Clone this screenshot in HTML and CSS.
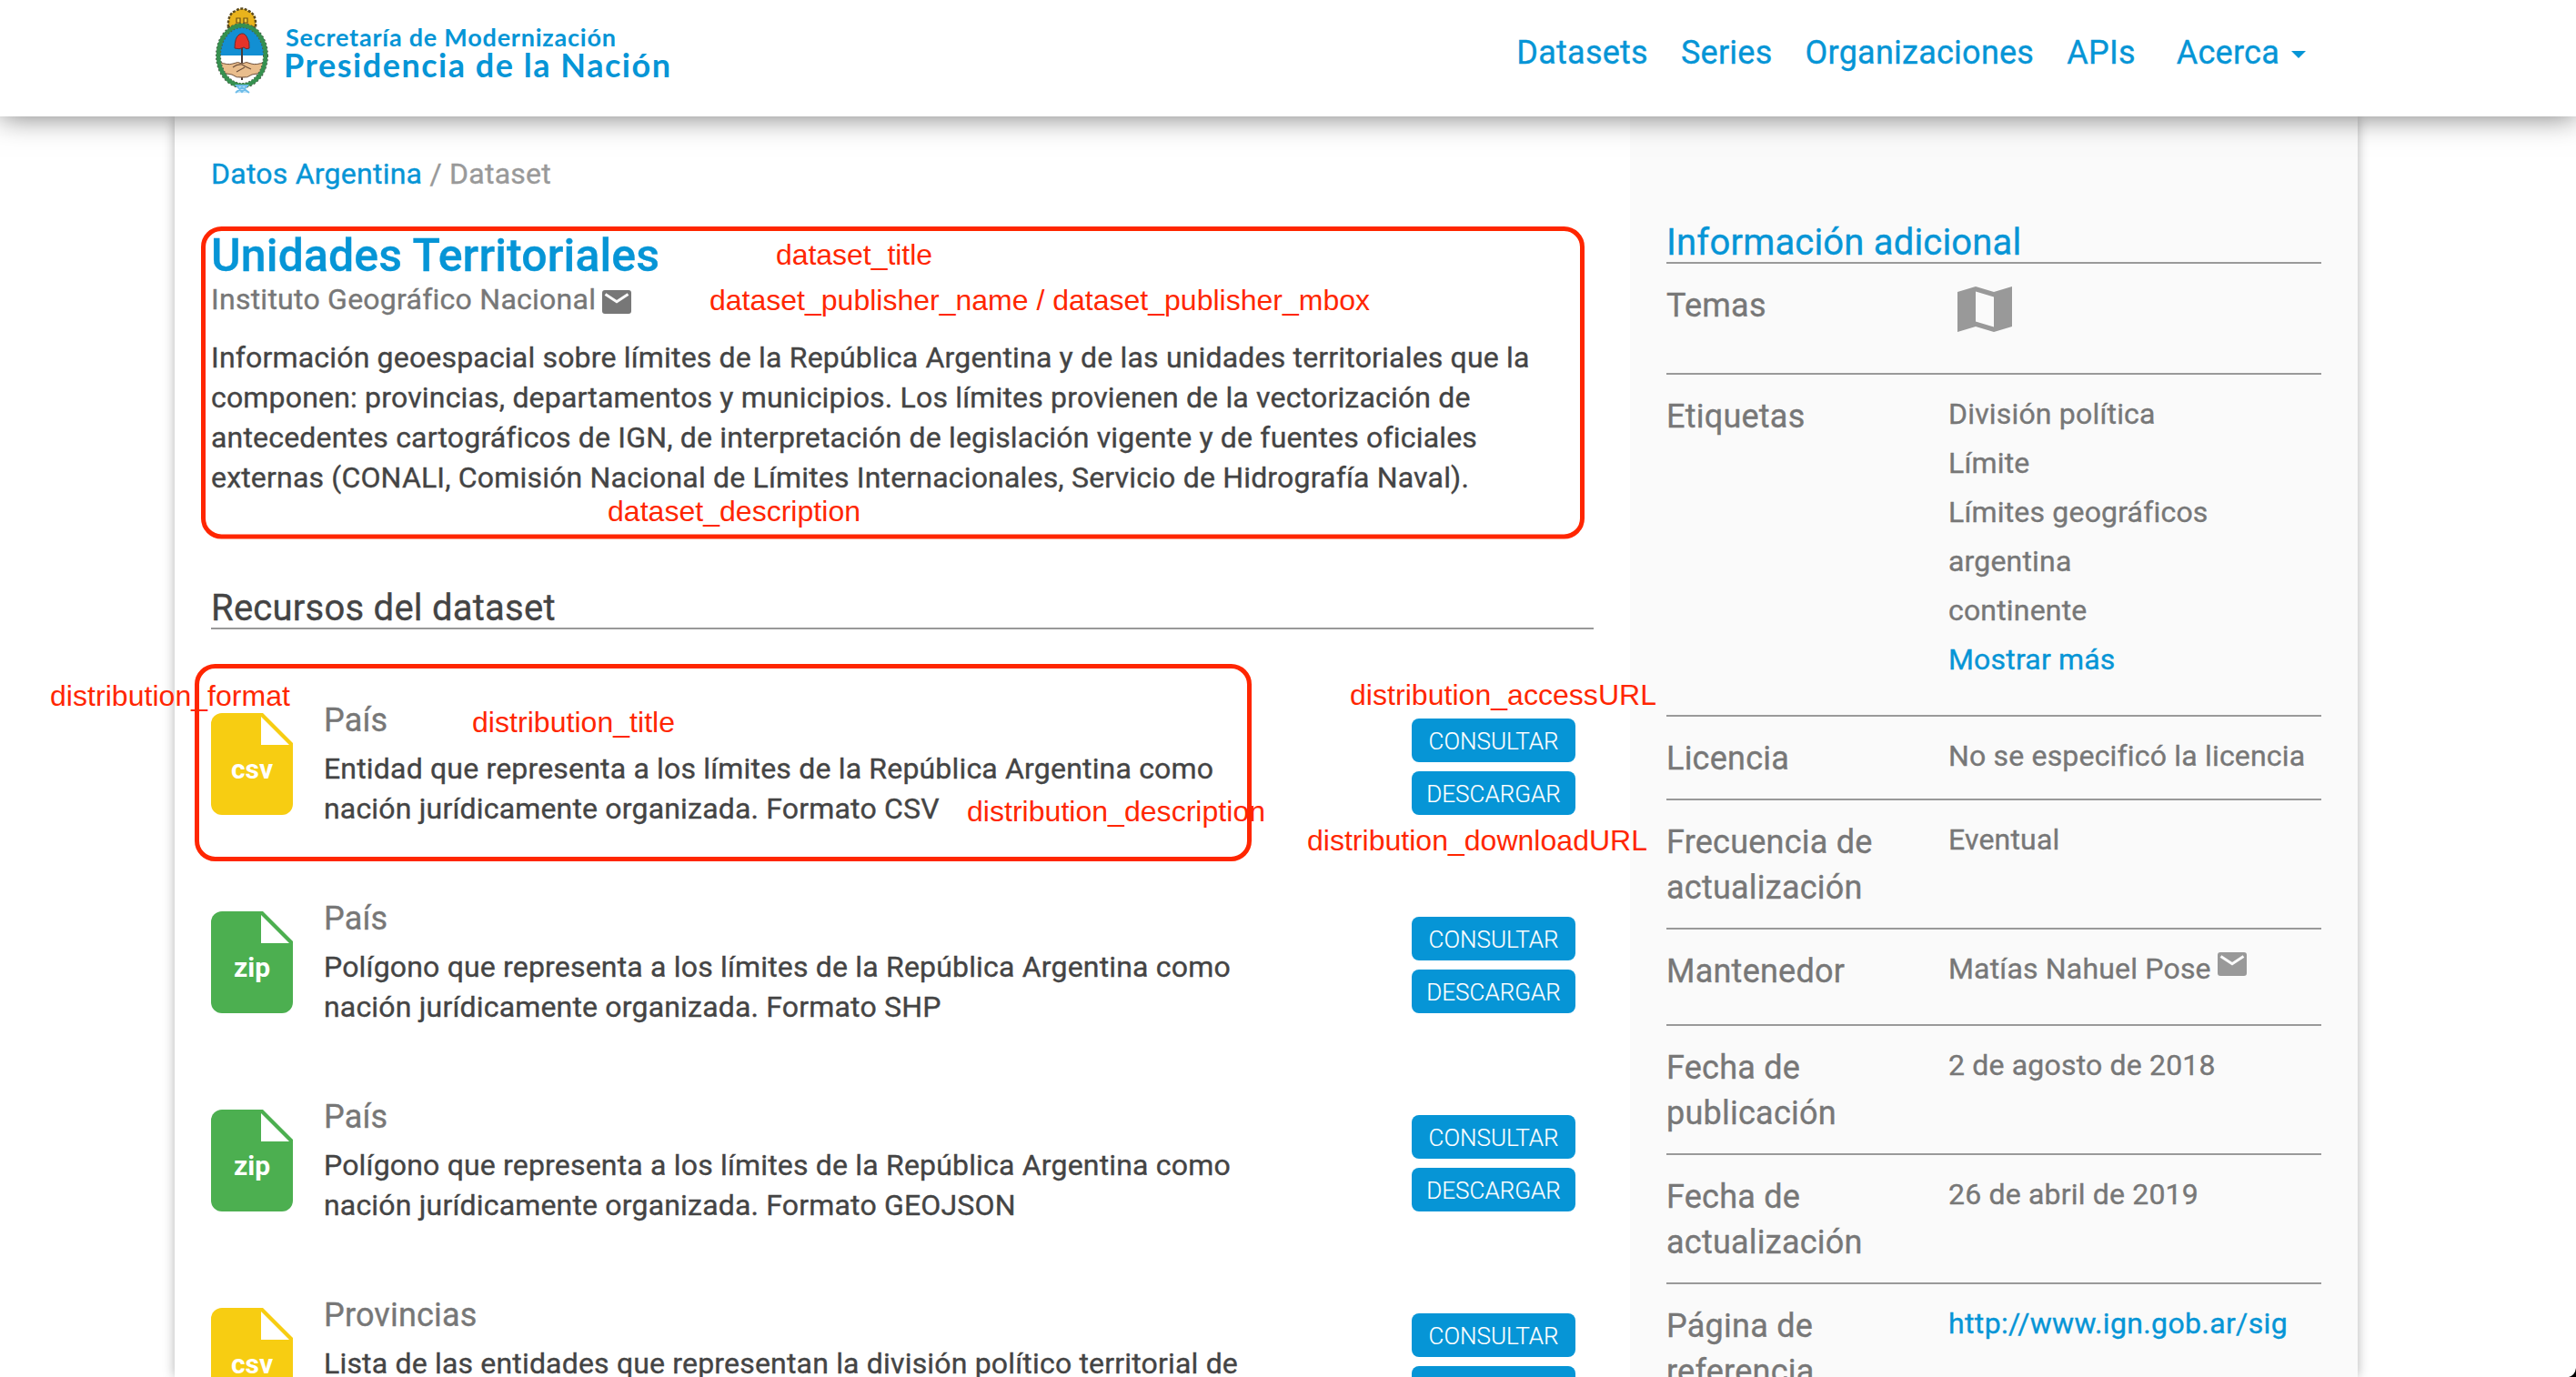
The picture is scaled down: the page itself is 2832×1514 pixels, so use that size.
FILE: index.html
```html
<!DOCTYPE html>
<html lang="es">
<head>
<meta charset="utf-8">
<title>Unidades Territoriales - Datos Argentina</title>
<link rel="stylesheet" href="styles.css">
</head>
<body>
<svg class="symbols" aria-hidden="true">
  <symbol id="mail" viewBox="0 0 32 26"><path fill="currentColor" d="M3 0h26a3 3 0 0 1 3 3v20a3 3 0 0 1-3 3H3a3 3 0 0 1-3-3V3a3 3 0 0 1 3-3z"/><path d="M3.500 4.500L16 12.800 28.500 4.500" fill="none" stroke="#fbfbfb" stroke-width="3"/></symbol>
  <symbol id="file" viewBox="0 0 90 112"><path fill="currentColor" d="M12 0h45l33 33v67a12 12 0 0 1-12 12H12a12 12 0 0 1-12-12V12A12 12 0 0 1 12 0z"/><path fill="#fff" d="M55 4v31h31z"/></symbol>
</svg>

<header class="header">
  <a class="logo">
    <svg width="520" height="112" viewBox="0 0 520 112">
      <g transform="translate(3 8)">
        <path d="M14 22Q13 7 22 4Q29-1 36 4Q45 7 44 22z" fill="#e9b31c" stroke="#5b4a1e" stroke-width="2.500" stroke-dasharray="3 1.500"/>
        <path d="M23 12h4v5h-4zM31 12h4v5h-4z" fill="#f3c93a" stroke="#6b4f14" stroke-width="1.200"/>
        <ellipse cx="29" cy="53" rx="25" ry="33" fill="#fff"/>
        <path d="M4 53a25 33 0 0 1 50 0z" fill="#128fd3"/>
        <path d="M29 42v38" stroke="#4a3b37" stroke-width="2"/>
        <path d="M21 45q0-12 5-15q5-3 8 2q4 6 3 13q-3 2-6-1q-5 3-10 1z" fill="#e5332a" stroke="#6b2b30" stroke-width="1"/>
        <path d="M4 60q9 4 15 2q6-3 10 0q5-3 10 0q6 2 15-2v9q-7 5-14 5q-5 4-11 3q-6 1-11-3q-7 0-14-5z" fill="#e9bd8c" stroke="#6f513c" stroke-width="1"/>
        <path d="M19 66q5-4 10-3q5 3 10 5M23 71l9-5" stroke="#6f513c" stroke-width="1.200" fill="none"/>
        <ellipse cx="29" cy="53" rx="26" ry="33" fill="none" stroke="#4c5548" stroke-width="6" stroke-dasharray="2 2"/>
        <ellipse cx="29" cy="53" rx="26" ry="33" fill="none" stroke="#36904f" stroke-width="4.500"/>
        <path d="M23 86h12l-6 7zM22 94l7-6 8 6" fill="#bfe3f7" stroke="#6dbce8" stroke-width="2"/>
      </g>
      <text class="logo-small" x="80" y="51" textLength="363">Secretaría de Modernización</text>
      <text class="logo-big" x="78" y="85" textLength="425">Presidencia de la Nación</text>
    </svg>
  </a>
  <nav class="nav">
    <a>Datasets</a><a>Series</a><a>Organizaciones</a><a>APIs</a><a class="acerca">Acerca<i class="caret"></i></a>
  </nav>
</header>

<div class="page">
  <main class="main">
    <div class="breadcrumb"><a>Datos Argentina</a> / Dataset</div>
    <h1 class="title">Unidades Territoriales</h1>
    <div class="publisher">Instituto Geográfico Nacional<svg class="mail"><use href="#mail"/></svg></div>
    <p class="description">Información geoespacial sobre límites de la República Argentina y de las unidades territoriales que la componen: provincias, departamentos y municipios. Los límites provienen de la vectorización de antecedentes cartográficos de IGN, de interpretación de legislación vigente y de fuentes oficiales externas (CONALI, Comisión Nacional de Límites Internacionales, Servicio de Hidrografía Naval).</p>
    <h2 class="section">Recursos del dataset</h2>
    <div class="resources">
      <article class="resource">
        <div class="file csv"><svg><use href="#file"/></svg><b>csv</b></div>
        <div class="info"><h3>País</h3><p>Entidad que representa a los límites de la República Argentina como nación jurídicamente organizada. Formato CSV</p></div>
        <div class="actions"><a>CONSULTAR</a><a>DESCARGAR</a></div>
      </article>
      <article class="resource">
        <div class="file zip"><svg><use href="#file"/></svg><b>zip</b></div>
        <div class="info"><h3>País</h3><p>Polígono que representa a los límites de la República Argentina como nación jurídicamente organizada. Formato SHP</p></div>
        <div class="actions"><a>CONSULTAR</a><a>DESCARGAR</a></div>
      </article>
      <article class="resource">
        <div class="file zip"><svg><use href="#file"/></svg><b>zip</b></div>
        <div class="info"><h3>País</h3><p>Polígono que representa a los límites de la República Argentina como nación jurídicamente organizada. Formato GEOJSON</p></div>
        <div class="actions"><a>CONSULTAR</a><a>DESCARGAR</a></div>
      </article>
      <article class="resource">
        <div class="file csv"><svg><use href="#file"/></svg><b>csv</b></div>
        <div class="info"><h3>Provincias</h3><p>Lista de las entidades que representan la división político territorial de</p></div>
        <div class="actions"><a>CONSULTAR</a><a></a></div>
      </article>
    </div>
  </main>

  <aside class="sidebar">
    <h2 class="side-title">Información adicional</h2>
    <dl class="facts">
      <div class="fact topics"><dt>Temas</dt><dd><svg class="map" viewBox="0 0 60 50"><path fill="#999" fill-rule="evenodd" d="M0 6L20 0 40 6 60 0V44L40 50 20 44 0 50zM20 5.500V38.500L40 44.500V11.500z"/></svg></dd></div>
      <div class="fact tags"><dt>Etiquetas</dt><dd><span>División política</span><span>Límite</span><span>Límites geográficos</span><span>argentina</span><span>continente</span><span><a>Mostrar más</a></span></dd></div>
      <div class="fact"><dt>Licencia</dt><dd>No se especificó la licencia</dd></div>
      <div class="fact"><dt>Frecuencia de actualización</dt><dd>Eventual</dd></div>
      <div class="fact maintainer"><dt>Mantenedor</dt><dd>Matías Nahuel Pose<svg class="mail"><use href="#mail"/></svg></dd></div>
      <div class="fact"><dt>Fecha de publicación</dt><dd>2 de agosto de 2018</dd></div>
      <div class="fact"><dt>Fecha de actualización</dt><dd>26 de abril de 2019</dd></div>
      <div class="fact"><dt>Página de referencia</dt><dd><a class="url">http://www.ign.gob.ar/sig</a></dd></div>
    </dl>
  </aside>
</div>

<svg class="notes" viewBox="0 0 2832 1514">
  <rect x="223.500" y="251.500" width="1516" height="338.500" rx="20"/>
  <rect x="216.500" y="732.500" width="1157" height="212" rx="20"/>
  <text x="853" y="291" textLength="172">dataset_title</text>
  <text x="780" y="341" textLength="726">dataset_publisher_name / dataset_publisher_mbox</text>
  <text x="668" y="573" textLength="278">dataset_description</text>
  <text x="55" y="776" textLength="264">distribution_format</text>
  <text x="519" y="805" textLength="223">distribution_title</text>
  <text x="1063" y="903" textLength="328">distribution_description</text>
  <text x="1484" y="775" textLength="337">distribution_accessURL</text>
  <text x="1437" y="935" textLength="374">distribution_downloadURL</text>
  <path class="corner" d="M2832 1504v10h-8q7-2 8-10z"/>
</svg>
</body>
</html>
```
FILE: styles.css
```css
* { box-sizing: border-box; margin: 0; padding: 0; }
body {
  width: 2832px; height: 1514px; overflow: hidden; position: relative;
  background: #fff; color: #444;
  font: 32px/44px Roboto, sans-serif;
  letter-spacing: .18px;
  -webkit-text-stroke: .35px currentColor;
}
a { color: #0695d6; text-decoration: none; }
.symbols { display: none; }

.header {
  position: relative; z-index: 1; height: 128px; background: #fff;
  padding: 0 297px 0 234px;
  display: flex; justify-content: space-between; align-items: flex-start;
  box-shadow: 0 0 30px rgba(0, 0, 0, .54);
}
.logo svg { display: block; }
.logo text { fill: #0695d6; font-family: Lato, sans-serif; font-weight: 700; letter-spacing: 0; -webkit-text-stroke: 0; }
.logo-small { font-size: 27px; }
.logo-big { font-size: 36px; }
.nav { display: flex; gap: 36px; padding-top: 33px; font-size: 36px; line-height: 50px; letter-spacing: .25px; }
.acerca { display: flex; align-items: center; margin-left: 9px; }
.caret { border: 8px solid transparent; border-top-color: #0695d6; border-bottom: 0; margin: 4px 0 0 13px; }

.page { width: 2400px; height: 1386px; margin-left: 192px; display: flex; overflow: clip; overflow-clip-margin: 20px; box-shadow: 0 0 12px rgba(0, 0, 0, .3); }
.main { width: 1600px; height: 1386px; padding: 41px 40px 0; background: #fff; overflow: hidden; }
.breadcrumb { color: #999; letter-spacing: .24px; }
.title { margin-top: 40px; font-size: 50px; line-height: 56px; font-weight: 500; color: #0695d6; letter-spacing: .12px; }
.publisher { display: flex; align-items: center; line-height: 40px; color: #777; letter-spacing: .25px; }
.mail { width: 32px; height: 26px; margin-left: 7px; }
.publisher .mail { margin-top: 6px; }
.description { margin-top: 22px; width: 1512px; }
.section { margin-top: 99px; font-size: 40px; line-height: 44px; font-weight: 400; border-bottom: 2px solid #999; padding-top: 1px; height: 46px; letter-spacing: .24px; }

.resources { padding-top: 75px; }
.resource { height: 218px; display: flex; align-items: flex-start; padding-right: 20px; }
.file { display: grid; width: 90px; height: 112px; margin-top: 17px; }
.file svg { grid-area: 1 / 1; width: 90px; height: 112px; }
.file b { grid-area: 1 / 1; padding-top: 40px; text-align: center; color: #fff; font-size: 30px; letter-spacing: 0; -webkit-text-stroke: 0; }
.csv { color: #f7cd12; }
.zip { color: #4caf50; }
.info { width: 1060px; margin-left: 34px; }
.info h3 { font-size: 36px; line-height: 50px; font-weight: 400; color: #777; margin-bottom: 6px; }
.actions { display: grid; gap: 10px; width: 180px; margin: 23px 0 0 auto; }
.actions a { height: 48px; line-height: 50px; border-radius: 8px; background: #0695d6; color: #fff; font-size: 26px; font-weight: 300; text-align: center; letter-spacing: 0; -webkit-text-stroke: .15px #fff; }

.sidebar { width: 800px; padding: 117px 40px 0; background: #fafafa; color: #777; overflow: hidden; }
.side-title { font-size: 40px; line-height: 44px; font-weight: 400; color: #0695d6; border-bottom: 2px solid #999; height: 45px; }
.fact { display: grid; grid-template-columns: 270px 410px; column-gap: 40px; padding: 20px 0; border-bottom: 2px solid #999; }
.fact dt { font-size: 36px; line-height: 50px; padding-top: 1px; margin-bottom: -1px; letter-spacing: .24px; }
.fact dd { line-height: 46px; }
.topics { height: 122px; }
.map { display: block; width: 60px; height: 50px; margin: 5px 0 0 10px; }
.tags { padding-bottom: 30px; }
.tags span { display: block; margin-bottom: 8px; }
.maintainer { height: 106px; }
.maintainer dd { display: flex; }
.maintainer .mail { margin-top: 5px; color: #999; }
.url { letter-spacing: .36px; }

.notes { position: absolute; left: 0; top: 0; width: 2832px; height: 1514px; z-index: 2; }
.notes rect { fill: none; stroke: #ff2600; stroke-width: 5; }
.notes text { fill: #ff2600; font: 32px "Liberation Sans", sans-serif; letter-spacing: 0; -webkit-text-stroke: 0; }
.notes .corner { fill: #000; }
```
